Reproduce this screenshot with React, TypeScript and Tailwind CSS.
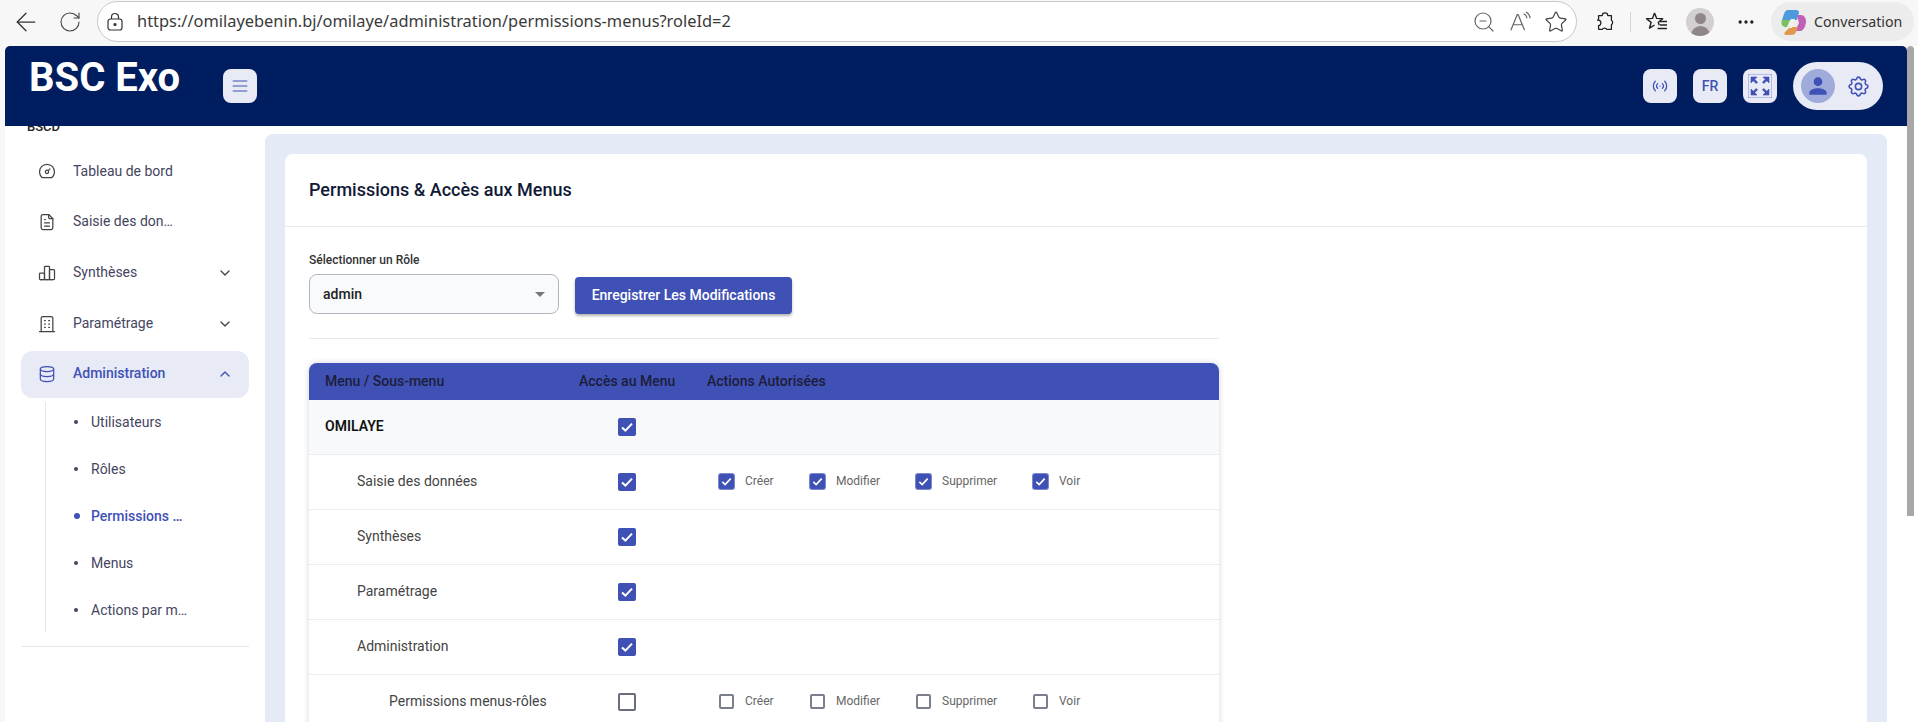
import { ArrowLeft, RotateCw, ZoomOut, Star, MoreHorizontal } from 'lucide-react';
import {
  TbDashboard, TbFileText, TbChartBar, TbBuilding, TbDatabase, TbChevronDown, TbChevronUp,
  TbMenu2, TbSettings, TbAccessPoint,
} from 'react-icons/tb';
import { MdPerson, MdZoomOutMap } from 'react-icons/md';

const navItems = [
  { label: 'Tableau de bord', icon: TbDashboard, h: 'h-[50px]' },
  { label: 'Saisie des don…', icon: TbFileText, h: 'h-[51px]' },
  { label: 'Synthèses', icon: TbChartBar, chevron: true, h: 'h-[51px]' },
  { label: 'Paramétrage', icon: TbBuilding, chevron: true, h: 'h-[51px]' },
];

const subItems = [
  { label: 'Utilisateurs' },
  { label: 'Rôles' },
  { label: 'Permissions …', active: true },
  { label: 'Menus' },
  { label: 'Actions par m…' },
];

const rows = [
  { label: 'OMILAYE', top: true, checked: true },
  { label: 'Saisie des données', checked: true, actions: true, actionsChecked: true, pad: 'pl-[48px]' },
  { label: 'Synthèses', checked: true, pad: 'pl-[48px]' },
  { label: 'Paramétrage', checked: true, pad: 'pl-[48px]' },
  { label: 'Administration', checked: true, pad: 'pl-[48px]' },
  { label: 'Permissions menus-rôles', checked: false, actions: true, actionsChecked: false, pad: 'pl-[80px]' },
];

const actionItems = [
  { label: 'Créer', w: 'w-[91px]' },
  { label: 'Modifier', w: 'w-[106px]' },
  { label: 'Supprimer', w: 'w-[117px]' },
  { label: 'Voir', w: 'w-[60px]' },
];

function Check({ checked, small }: { checked: boolean; small?: boolean }) {
  const size = small ? 'w-[15px] h-[15px]' : 'w-[18px] h-[18px]';
  if (!checked) {
    return <span className={`${size} block shrink-0 rounded-[2px] border-2 ${small ? 'border-[#7b7f8b]' : 'border-[#6a6e7c]'} bg-white`} />;
  }
  return (
    <span className={`${size} flex shrink-0 items-center justify-center rounded-[2px] bg-[#3f51b5] ${small ? 'ring-1 ring-[#7c88cc]' : ''}`}>
      <svg viewBox="0 0 18 18" className="h-full w-full">
        <path d="M4 9.4l3.4 3.2L14 5.6" fill="none" stroke="white" strokeWidth="2" />
      </svg>
    </span>
  );
}

function ToolBtn({ children }: { children: React.ReactNode }) {
  return <div className="flex h-[34px] w-[34px] items-center justify-center rounded-lg bg-[#e8eaf6] text-[#3f51b5]">{children}</div>;
}

function BrowserBar() {
  return (
    <div className="flex h-[46px] shrink-0 items-center bg-[#f7f7f7] pb-[3px] text-[#333]" style={{ fontFamily: '"Noto Sans", sans-serif' }}>
      <div className="flex w-[41px] justify-end"><ArrowLeft size={30} strokeWidth={1} /></div>
      <div className="flex w-[41px] justify-end"><RotateCw size={24} strokeWidth={1.1} className="text-[#444]" /></div>
      <div className="ml-[15px] flex h-[41px] w-[1480px] items-center rounded-full border border-[#c8c8c8] bg-white pl-[8px] pr-[8px]">
        <svg viewBox="0 0 18 20" className="h-[20px] w-[18px] text-[#333]" fill="none" stroke="currentColor" strokeWidth="1.2">
          <rect x="2" y="7" width="14" height="11" rx="2.5" />
          <path d="M5.5 7V5a3.500 3.500 0 0 1 7 0v2" />
          <circle cx="9" cy="12.500" r="1" fill="currentColor" />
        </svg>
        <span className="ml-[13px] whitespace-nowrap text-[16.4px] text-[#3a3a3a]">https://omilayebenin.bj/omilaye/administration/permissions-menus?roleId=2</span>
        <div className="ml-auto flex items-center gap-[13px] text-[#666]">
          <ZoomOut size={24} strokeWidth={1.2} />
          <svg viewBox="0 0 24 24" className="h-[22px] w-[22px]" fill="none" stroke="currentColor" strokeWidth="1.3">
            <path d="M2 21L9 4h1l7 17M5 15h9" />
            <path d="M16 3c2 1 3.400 3 3.500 5M18.500 1c2.400 1.400 4.400 4 4.500 7" />
          </svg>
          <Star size={24} strokeWidth={1.2} className="text-[#444]" />
        </div>
      </div>
      <svg viewBox="0 0 24 24" className="ml-[17px] h-[22px] w-[22px] text-[#222]" fill="none" stroke="currentColor" strokeWidth="1.4">
        <path d="M9 5a3 3 0 0 1 6 0h4v5a3 3 0 0 1 0 5v5h-5a3 3 0 0 0-5 0H5v-4a3 3 0 0 0-1-6 3 3 0 0 1 1-1V5z" strokeLinejoin="round" />
      </svg>
      <div className="ml-[14px] h-[20px] w-[1px] bg-[#d4d4d4]" />
      <svg viewBox="0 0 24 24" className="ml-[14px] h-[24px] w-[24px] text-[#222]" fill="none" stroke="currentColor" strokeWidth="1.4">
        <path d="M9.500 3l2.200 5.400 6 .3-4.400 3.600 1 3M9.500 15l-5 3.200 1.600-5.800L1.500 8.700l6-.3L9.500 3" strokeLinejoin="round" />
        <path d="M15 11.500h7M15 15h7M12.500 18.500h9.500" />
      </svg>
      <div className="relative ml-[17px] h-[28px] w-[28px] overflow-hidden rounded-full bg-[#d2d0d0]">
        <div className="absolute left-[9px] top-[5px] h-[11px] w-[11px] rounded-full bg-[#8f8689]" />
        <div className="absolute left-[5px] top-[18px] h-[12px] w-[19px] rounded-t-full bg-[#8f8689]" />
      </div>
      <MoreHorizontal size={20} strokeWidth={2} className="ml-[22px] text-[#222]" />
      <div className="ml-[15px] flex h-[39px] w-[143px] items-center rounded-full bg-[#ececec] pl-[8px]">
        <svg viewBox="0 0 28 28" className="h-[28px] w-[28px]">
          <path d="M9 2h8c2 0 3 1 3 2.500L18 12H3l2-6c1-2.500 2-4 4-4z" fill="#4b9bdc" />
          <path d="M3 12h8l-3 7c-4 1-7-3-5-7z" fill="#78c15c" />
          <path d="M18 7h4c3 0 5 3 5 6 0 4-2 9-5 10h-6l4-8-2-8z" fill="#c060b8" />
          <path d="M11 19h8l-2 5c-1 2-2 3-5 3H7c-2 0-2-2-1-3l5-5z" fill="#e0984f" />
          <path d="M12 11l4 0-3 9-3 0z" fill="#f4f0f0" />
        </svg>
        <span className="ml-[7px] text-[14.2px] text-[#333]">Conversation</span>
      </div>
    </div>
  );
}

function AppHeader() {
  return (
    <header className="flex h-[80px] shrink-0 items-start rounded-t-[5px] bg-[#001e5f] pl-[24px] pr-[24px]">
      <div className="w-[194px] pt-[8px] text-[40px] font-bold leading-[47px] text-white">BSC Exo</div>
      <div className="pt-[23px]">
        <ToolBtn><TbMenu2 size={20} className="text-[#7485c9]" /></ToolBtn>
      </div>
      <div className="ml-auto flex items-start gap-[16px] pt-[23px]">
        <ToolBtn><TbAccessPoint size={20} strokeWidth={1.5} /></ToolBtn>
        <ToolBtn><span className="text-[14px] font-medium">FR</span></ToolBtn>
        <ToolBtn><MdZoomOutMap size={24} stroke="currentColor" strokeWidth={0.6} /></ToolBtn>
        <div className="-mt-[7px] flex h-[48px] w-[90px] items-center rounded-full bg-[#e8eaf6] pl-[8px]">
          <div className="flex h-[34px] w-[34px] items-center justify-center rounded-full bg-[#9fabdb] text-[#3f51b5]">
            <MdPerson size={26} />
          </div>
          <TbSettings size={25} strokeWidth={1.5} className="ml-[11px] text-[#3f51b5]" />
        </div>
      </div>
    </header>
  );
}

function Sidebar() {
  return (
    <aside className="flex w-[260px] shrink-0 flex-col bg-white px-[16px] text-[14px] text-[#45455f]">
      <div className="h-[6px] overflow-hidden pl-[6px]">
        <span className="-mt-[9px] block text-[13px] font-medium leading-[20px] text-[#222]">BSCD</span>
      </div>
      <div className="mt-[14px] flex flex-col">
        {navItems.map(item => (
          <div key={item.label} className={`flex ${item.h} items-center pl-[16px] pr-[16px]`}>
            <item.icon size={20} strokeWidth={1.5} className="shrink-0 text-[#444]" />
            <span className="ml-[16px]">{item.label}</span>
            {item.chevron && <TbChevronDown size={16} className="ml-auto text-[#444]" />}
          </div>
        ))}
      </div>
      <div className="mt-[2px] flex h-[47px] items-center rounded-xl bg-[#e8eaf6] pb-[2px] pl-[16px] pr-[16px] font-medium text-[#3f51b5]">
        <TbDatabase size={20} strokeWidth={1.5} className="shrink-0" />
        <span className="ml-[16px]">Administration</span>
        <TbChevronUp size={16} className="ml-auto text-[#3f51b5]" />
      </div>
      <div className="ml-[24px] mt-[4px] flex h-[230px] flex-col gap-[11px] border-l border-[#e4e7ee] pl-[28px] pt-[2px]">
        {subItems.map(item => (
          <div key={item.label} className={`flex h-[36px] shrink-0 items-center ${item.active ? 'font-medium text-[#3f51b5]' : ''}`}>
            <span className={`${item.active ? 'mr-[11px] h-[6px] w-[6px] bg-[#3f51b5]' : 'mr-[13px] h-[4px] w-[4px] bg-[#45455f]'} block shrink-0 rounded-full`} />
            <span>{item.label}</span>
          </div>
        ))}
      </div>
      <div className="mt-[14px] border-t border-[#e4e7ee]" />
    </aside>
  );
}

function PermissionsCard() {
  return (
    <section className="rounded-t-[8px] bg-white">
      <h1 className="flex h-[73px] items-center border-b border-[#e8ebf0] pl-[24px] text-[18px] font-medium leading-none text-[#111936]">Permissions &amp; Accès aux Menus</h1>
      <div className="w-[934px] pl-[24px] pt-[24px]">
        <label className="block text-[12px] font-medium leading-[18px] text-[#333]">Sélectionner un Rôle</label>
        <div className="mt-[5px] flex items-start">
          <div className="flex h-[40px] w-[250px] items-center justify-between rounded-lg border border-[#b4b5bc] bg-[#f8fafc] pl-[13px] pr-[13px] text-[14px] font-medium text-[#222]">
            <span>admin</span>
            <span className="block h-0 w-0 border-x-[5px] border-t-[5px] border-x-transparent border-t-[#777]" />
          </div>
          <button className="ml-[16px] mt-[3px] h-[37px] w-[217px] rounded bg-[#3f51b5] text-[14px] font-medium text-white shadow-[0_2px_3px_rgba(0,0,0,0.3)]">Enregistrer Les Modifications</button>
        </div>
        <div className="mt-[24px] border-t border-[#e6e8ec]" />
        <div className="mt-[24px] overflow-hidden rounded-t-lg shadow-[0_0_6px_rgba(30,40,90,0.18)]">
          <div className="flex h-[37px] items-center bg-[#3f51b5] text-[14px] font-medium text-[#1d1d3a]">
            <span className="w-[270px] pl-[16px]">Menu / Sous-menu</span>
            <span className="w-[128px]">Accès au Menu</span>
            <span>Actions Autorisées</span>
          </div>
          {rows.map(row => (
            <div key={row.label} className={`flex h-[55px] shrink-0 items-center border-b border-[#eceef1] text-[14px] ${row.top ? 'bg-[#f8f9fb] font-semibold text-[#111]' : 'bg-white text-[#444]'}`}>
              <span className={`w-[309px] pb-[2px] ${row.pad ?? 'pl-[16px]'}`}>{row.label}</span>
              <Check checked={row.checked} />
              {row.actions && (
                <div className="ml-[83px] -mt-[2px] flex items-center text-[12px] text-[#666]">
                  {actionItems.map(action => (
                    <div key={action.label} className={`flex ${action.w} items-center`}>
                      <Check checked={row.actionsChecked ?? false} small />
                      <span className="ml-[11px]">{action.label}</span>
                    </div>
                  ))}
                </div>
              )}
            </div>
          ))}
        </div>
      </div>
    </section>
  );
}

export default function App() {
  return (
    <div className="flex h-[722px] w-[1918px] flex-col overflow-hidden bg-[#f7f7f7]" style={{ fontFamily: 'Roboto, sans-serif' }}>
      <BrowserBar />
      <div className="flex min-h-0 flex-1">
        <div className="w-[5px] shrink-0" />
        <div className="flex min-w-0 flex-1 flex-col rounded-t-[5px] bg-white">
          <AppHeader />
          <div className="flex min-h-0 flex-1">
            <Sidebar />
            <main className="mr-[20px] mt-[8px] min-w-0 flex-1 overflow-hidden rounded-t-[8px] bg-[#e4ebf7] px-[20px] pt-[20px]">
              <PermissionsCard />
            </main>
          </div>
        </div>
        <div className="flex w-[11px] shrink-0 bg-white">
          <div className="h-[470px] w-[7px] rounded-t-[4px] bg-[#a8a8a8]" />
        </div>
      </div>
    </div>
  );
}
